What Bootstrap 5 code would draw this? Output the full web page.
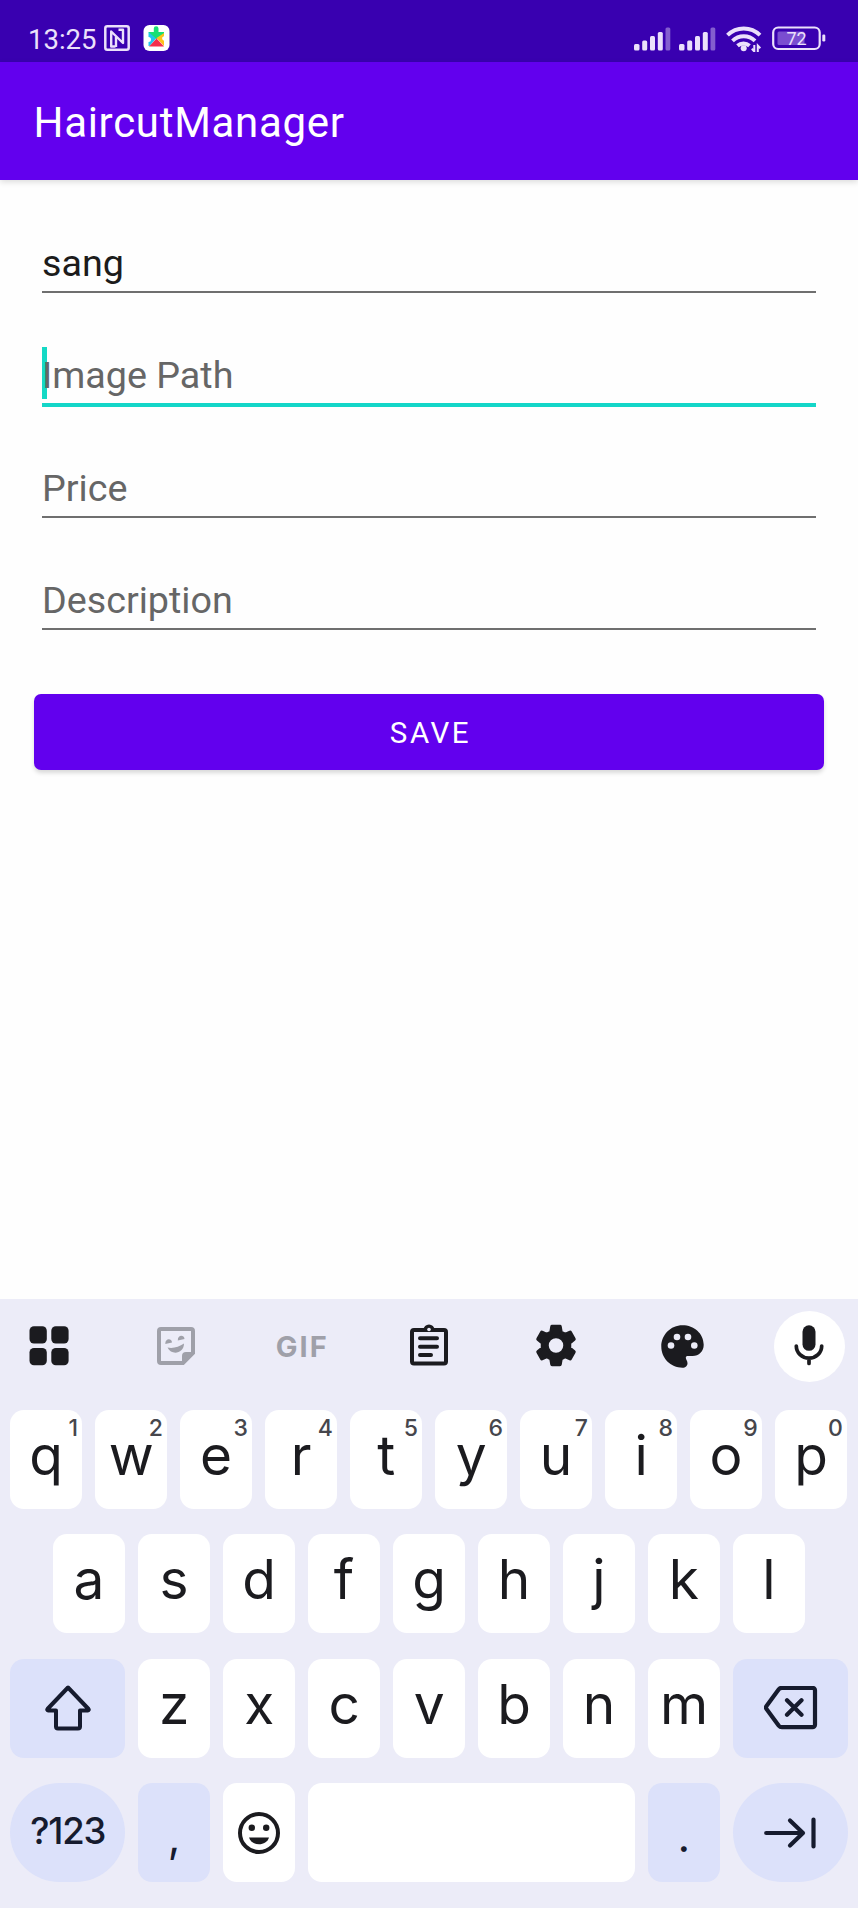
<!DOCTYPE html>
<html lang="en">
<head>
<meta charset="utf-8">
<meta name="viewport" content="width=device-width, initial-scale=1">
<title>HaircutManager</title>
<link href="https://cdn.jsdelivr.net/npm/bootstrap@5.3.0/dist/css/bootstrap.min.css" rel="stylesheet">
<style>
  body { font-family: Roboto, sans-serif; background: #fefefe; height: 1908px; overflow: hidden; }
  svg { display: block; flex: none; }
  .status-bar { height: 62px; background: #3900b0; color: #ebe0fb; padding: 0 32px 0 28px; }
  .clock { font-size: 27.5px; line-height: 80px; width: 75.5px; }
  .status-icons { padding-top: 25px; }
  .app-bar { height: 118px; background: #6200ee; padding: 0 33.5px; box-shadow: 0 2px 6px rgba(0,0,0,.14); }
  .app-title { font-size: 42px; line-height: 121px; letter-spacing: .7px; color: #fff; }
  .field { height: 112.5px; margin: 0 42px; }
  .field .form-control { height: 56.5px; font-size: 37.7px; line-height: 1.2; padding: 0 0 1px; border: 0; border-bottom: 2px solid #6f6f6f; border-radius: 0; background: transparent; color: #1c1c1c; box-shadow: none; }
  .field .form-control::placeholder { color: #666; opacity: 1; }
  .field .form-control.focused { height: 59px; border-bottom: 4px solid #14d6c8; margin-bottom: -2px; }
  .caret { left: 0; top: 54.5px; width: 4.5px; height: 52px; background: #14d9c5; z-index: -1; }
  .save-btn { height: 76px; margin: 63.5px 34px 0; padding: 4px 0 0 3px; border: 0; border-radius: 7px; background: #6200ee; color: #fff; font-size: 29.5px; letter-spacing: 2.6px; box-shadow: 0 3px 4px rgba(0,0,0,.15); }
  .keyboard { height: 609.5px; background: #ececf8; color: #1b1b1f; font-family: Inter, sans-serif; }
  .tools { height: 111px; padding: 12px 13px 0 13px; }
  .tool { width: 71.5px; height: 71.5px; color: #1b1b1f; }
  .tool.dim { color: #9fa0a9; }
  .gif { font-size: 29px; font-weight: 700; letter-spacing: 2px; }
  .keys { gap: 25.5px; padding: 0 10.4px; }
  .key-row { gap: 13.4px; }
  .key { width: 71.6px; height: 99px; border-radius: 14px; background: #fff; font-size: 55px; line-height: 90px; text-align: center; flex: none; }
  .key sup { position: absolute; top: 6px; right: 4px; font-size: 23px; font-weight: 500; line-height: 25px; color: #46464c; }
  .key.fn { background: #dce1fa; color: #161b2e; }
  .key.wide { width: 114.6px; }
  .key.pill { border-radius: 50px; }
  .key.low { font-size: 44px; line-height: 106px; }
  .sym { font-size: 36.5px; font-weight: 500; letter-spacing: -1.2px; line-height: 1; padding-bottom: 3px; }
</style>
</head>
<body class="d-flex flex-column">

<header class="status-bar d-flex justify-content-between flex-shrink-0">
  <div class="d-flex">
    <span class="clock">13:25</span>
    <div class="status-icons d-flex">
      <svg width="26" height="26" viewBox="0 0 26 26" fill="none" stroke="currentColor" stroke-linejoin="round">
        <rect x="1.300" y="1.300" width="23.400" height="23.400" rx="2" stroke-width="2.500"/>
        <path d="M11.500 21.500H7.200V6.500L19 18V4.800H14.500M12 12V22" stroke-width="2.400"/>
      </svg>
      <svg class="ms-3" width="26" height="26" viewBox="2.500 0 26 26" overflow="visible">
        <rect width="26" height="26" rx="6" fill="#fff"/>
        <path d="M5 7h5l3 6-7 8H5v-4a2.500 2.500 0 0 0 0-5z" fill="#20c5ef"/>
        <path d="M5 7h5.300V3.500a2.300 2.300 0 0 1 4.700 0V7H20.500v4l-7.500 3z" fill="#18df74"/>
        <path d="M20.500 8v3a2.400 2.400 0 0 0 0 4.700V21l-7.500-8z" fill="#ffc21a"/>
        <path d="M5.500 21.500 13 13.500l7.500 8z" fill="#f42e4c"/>
      </svg>
    </div>
  </div>
  <div class="status-icons d-flex">
    <svg width="37" height="27" viewBox="0 0 37 27" fill="currentColor">
      <rect x="0" y="19" width="5.500" height="6.500" rx="1.500"/><rect x="8.200" y="15.500" width="5" height="10" rx="1.500"/><rect x="16" y="11" width="5" height="14.500" rx="1.500"/><rect x="23.800" y="7" width="5" height="18.500" rx="1.500"/><rect x="31.500" y="2.500" width="4.800" height="23" rx="1.500" opacity=".42"/>
    </svg>
    <svg width="37" height="27" viewBox="0 0 37 27" fill="currentColor" style="margin-left:8.500px">
      <rect x="0" y="19" width="5.500" height="6.500" rx="1.500"/><rect x="8.200" y="15.500" width="5" height="10" rx="1.500"/><rect x="16" y="11" width="5" height="14.500" rx="1.500"/><rect x="23.800" y="7" width="5" height="18.500" rx="1.500"/><rect x="31.500" y="2.500" width="4.800" height="23" rx="1.500" opacity=".42"/>
    </svg>
    <svg width="37" height="27" viewBox="0 0 37 27" fill="none" stroke="currentColor" style="margin-left:9.500px">
      <path d="M1.500 10.200a23 23 0 0 1 32.500 0M6.500 15.800a16 16 0 0 1 22.500 0M11.500 20.800a9 9 0 0 1 12 0" stroke-width="3.900"/>
      <circle cx="17.700" cy="23.200" r="3" fill="currentColor" stroke="none"/>
      <path d="M28.300 20v6.500l-2.500-2.700M31.800 27v-6.500l2.500 2.700" stroke-width="2"/>
    </svg>
    <svg width="54" height="27" viewBox="0 0 54 27" style="margin-left:9.500px">
      <rect x="1.200" y="2.500" width="46.500" height="21.500" rx="5" fill="none" stroke="currentColor" stroke-width="2.200"/>
      <rect x="5.500" y="6.500" width="27" height="13.500" rx="1.500" fill="#7a4dd0"/>
      <rect x="50.300" y="9.500" width="3" height="7" rx="1.200" fill="currentColor"/>
      <text x="24.500" y="20" text-anchor="middle" font-size="18" fill="currentColor">72</text>
    </svg>
  </div>
</header>

<nav class="app-bar flex-shrink-0 position-relative">
  <div class="app-title">HaircutManager</div>
</nav>

<main class="flex-grow-1">
  <form>
    <div class="field d-flex flex-column justify-content-end"><input class="form-control" type="text" value="sang"></div>
    <div class="field d-flex flex-column justify-content-end position-relative" style="z-index:0">
      <span class="caret position-absolute"></span>
      <input class="form-control focused" type="text" placeholder="Image Path">
    </div>
    <div class="field d-flex flex-column justify-content-end"><input class="form-control" type="text" placeholder="Price"></div>
    <div class="field d-flex flex-column justify-content-end"><input class="form-control" type="text" placeholder="Description"></div>
    <div class="d-grid"><button class="btn save-btn" type="button">SAVE</button></div>
  </form>
</main>

<section class="keyboard flex-shrink-0">
  <div class="tools d-flex justify-content-between">
    <div class="tool d-flex align-items-center justify-content-center">
      <svg width="40" height="40" fill="currentColor"><rect x=".5" y=".2" width="17.300" height="17.300" rx="4.500"/><rect x="22.300" y=".2" width="17.300" height="17.300" rx="4.500"/><rect x=".5" y="22" width="17.300" height="17.300" rx="4.500"/><rect x="22.300" y="22" width="17.300" height="17.300" rx="4.500"/></svg>
    </div>
    <div class="tool dim d-flex align-items-center justify-content-center">
      <svg width="38" height="38" viewBox="0 0 38 38" fill="currentColor">
        <path d="M4 2H34a2 2 0 0 1 2 2V26L26 36H4a2 2 0 0 1-2-2V4a2 2 0 0 1 2-2z" fill="none" stroke="currentColor" stroke-width="4"/>
        <path d="M25 37V29a4 4 0 0 1 4-4h8v2L27 37z"/>
        <path d="M8.300 17c-.3-6 6.500-6 6.700-1.500zM20.800 13.500c-.3-6 6.500-6 6.700-1.500zM10.500 20.500c5.500 1.200 11.500-.5 16.500-4C27 26.500 14.500 29 10.500 20.500z"/>
      </svg>
    </div>
    <div class="tool dim d-flex align-items-center justify-content-center"><span class="gif">GIF</span></div>
    <div class="tool d-flex align-items-center justify-content-center">
      <svg width="40" height="44" viewBox="0 1.500 40 44" fill="none" stroke="currentColor" stroke-width="4" stroke-linecap="round">
        <rect x="3" y="7.500" width="34" height="33.500" rx="2"/>
        <path d="M11 15.800h17M11 24.200h17M11 32.500h11"/>
        <path d="M14.500 7.500a5.500 5.500 0 0 1 11 0v2h-11z" fill="currentColor" stroke="none"/><circle cx="20" cy="7" r="1.800" fill="#ececf8" stroke="none"/>
      </svg>
    </div>
    <div class="tool d-flex align-items-center justify-content-center">
      <svg width="42" height="44" viewBox="0 0 42 44">
        <path fill="currentColor" fill-rule="evenodd" stroke="currentColor" stroke-width="3.500" stroke-linejoin="round" d="M17 2.500h8l1 5.800 4 2.300 5.200-2.200 3.800 6.800-4.500 3.700v5.200l4.500 3.700-3.800 6.800-5.200-2.200-4 2.300-1 5.800h-8l-1-5.800-4-2.300-5.200 2.200L3 27.800l4.500-3.700v-5.200L3 15.200 6.800 8.400l5.200 2.200 4-2.300zM21 12.500a9 9 0 1 0 0 18a9 9 0 1 0 0-18z"/>
      </svg>
    </div>
    <div class="tool d-flex align-items-center justify-content-center">
      <svg width="43" height="43" viewBox="0 0 43 43">
        <path fill="currentColor" d="M21.500.3C9.500.3.3 10 .3 21.500S9.500 42.700 21.500 42.700c3 0 5-2 5-4.500 0-3-1.700-3.500-1.700-5.500 0-1 .8-1.700 2-1.700h4.700c6.500 0 11.200-4.500 11.200-11.200C42.700 8.500 33 .3 21.500.3z"/>
        <g fill="#ececf8"><circle cx="10" cy="20.500" r="3.300"/><circle cx="16" cy="12" r="3.300"/><circle cx="27" cy="12" r="3.300"/><circle cx="33.300" cy="20.500" r="3.300"/></g>
      </svg>
    </div>
    <div class="tool bg-white rounded-circle d-flex align-items-center justify-content-center">
      <svg width="30" height="42" viewBox="0 0 30 42" fill="none" stroke="currentColor" stroke-linecap="round">
        <rect x="8.500" y=".3" width="13" height="25.500" rx="6.500" fill="currentColor" stroke="none"/>
        <path d="M2.300 21a12.700 12.200 0 0 0 25.400 0M15 33.500v5" stroke-width="3.700"/>
      </svg>
    </div>
  </div>

  <div class="keys d-flex flex-column">
    <div class="key-row d-flex">
      <div class="key position-relative">q<sup>1</sup></div>
      <div class="key position-relative">w<sup>2</sup></div>
      <div class="key position-relative">e<sup>3</sup></div>
      <div class="key position-relative">r<sup>4</sup></div>
      <div class="key position-relative">t<sup>5</sup></div>
      <div class="key position-relative">y<sup>6</sup></div>
      <div class="key position-relative">u<sup>7</sup></div>
      <div class="key position-relative">i<sup>8</sup></div>
      <div class="key position-relative">o<sup>9</sup></div>
      <div class="key position-relative">p<sup>0</sup></div>
    </div>
    <div class="key-row d-flex justify-content-center">
      <div class="key">a</div><div class="key">s</div><div class="key">d</div><div class="key">f</div><div class="key">g</div><div class="key">h</div><div class="key">j</div><div class="key">k</div><div class="key">l</div>
    </div>
    <div class="key-row d-flex">
      <div class="key fn wide d-flex align-items-center justify-content-center">
        <svg width="48" height="46" viewBox="0 .5 48 46" fill="none" stroke="currentColor" stroke-width="4" stroke-linejoin="round"><path d="M24 3 3.500 24.500a.9.900 0 0 0 .7 1.500H12V42a2 2 0 0 0 2 2H34a2 2 0 0 0 2-2V26h7.800a.9.900 0 0 0 .7-1.500z"/></svg>
      </div>
      <div class="key">z</div><div class="key">x</div><div class="key">c</div><div class="key">v</div><div class="key">b</div><div class="key">n</div><div class="key">m</div>
      <div class="key fn wide d-flex align-items-center justify-content-center">
        <svg width="54" height="44" viewBox="1 .5 54 44" fill="none" stroke="currentColor" stroke-width="4.200" stroke-linecap="round" stroke-linejoin="round"><path d="M18.500 2.300H49a2.500 2.500 0 0 1 2.500 2.500V39.200a2.500 2.500 0 0 1-2.500 2.500H18.500a4 4 0 0 1-3.200-1.500L3 23.500a2.500 2.500 0 0 1 0-3L15.300 3.800a4 4 0 0 1 3.200-1.500zM23.500 14.700 38 29.300M38 14.700 23.500 29.300" transform="translate(.5 0)"/></svg>
      </div>
    </div>
    <div class="key-row d-flex">
      <div class="key fn wide pill d-flex align-items-center justify-content-center"><span class="sym">?123</span></div>
      <div class="key fn low">,</div>
      <div class="key d-flex align-items-center justify-content-center">
        <svg width="42" height="42" viewBox="0 0 42 42" fill="currentColor"><circle cx="21" cy="21" r="19" fill="none" stroke="currentColor" stroke-width="4"/><circle cx="13.800" cy="15.700" r="3.200"/><circle cx="28.200" cy="15.700" r="3.200"/><path d="M11 25.500H31C28.500 34.500 13.500 34.500 11 25.500z"/></svg>
      </div>
      <div class="key flex-grow-1"></div>
      <div class="key fn low">.</div>
      <div class="key fn wide pill d-flex align-items-center justify-content-center">
        <svg width="52" height="32" viewBox="0 0 52 32" fill="none" stroke="currentColor" stroke-width="4.200" stroke-linecap="round" stroke-linejoin="round"><path d="M2.200 16H39M26 3.500 39 16 26 28.500M49.500 2.500v27"/></svg>
      </div>
    </div>
  </div>
</section>

<script src="https://cdn.jsdelivr.net/npm/bootstrap@5.3.0/dist/js/bootstrap.bundle.min.js"></script>
</body>
</html>
